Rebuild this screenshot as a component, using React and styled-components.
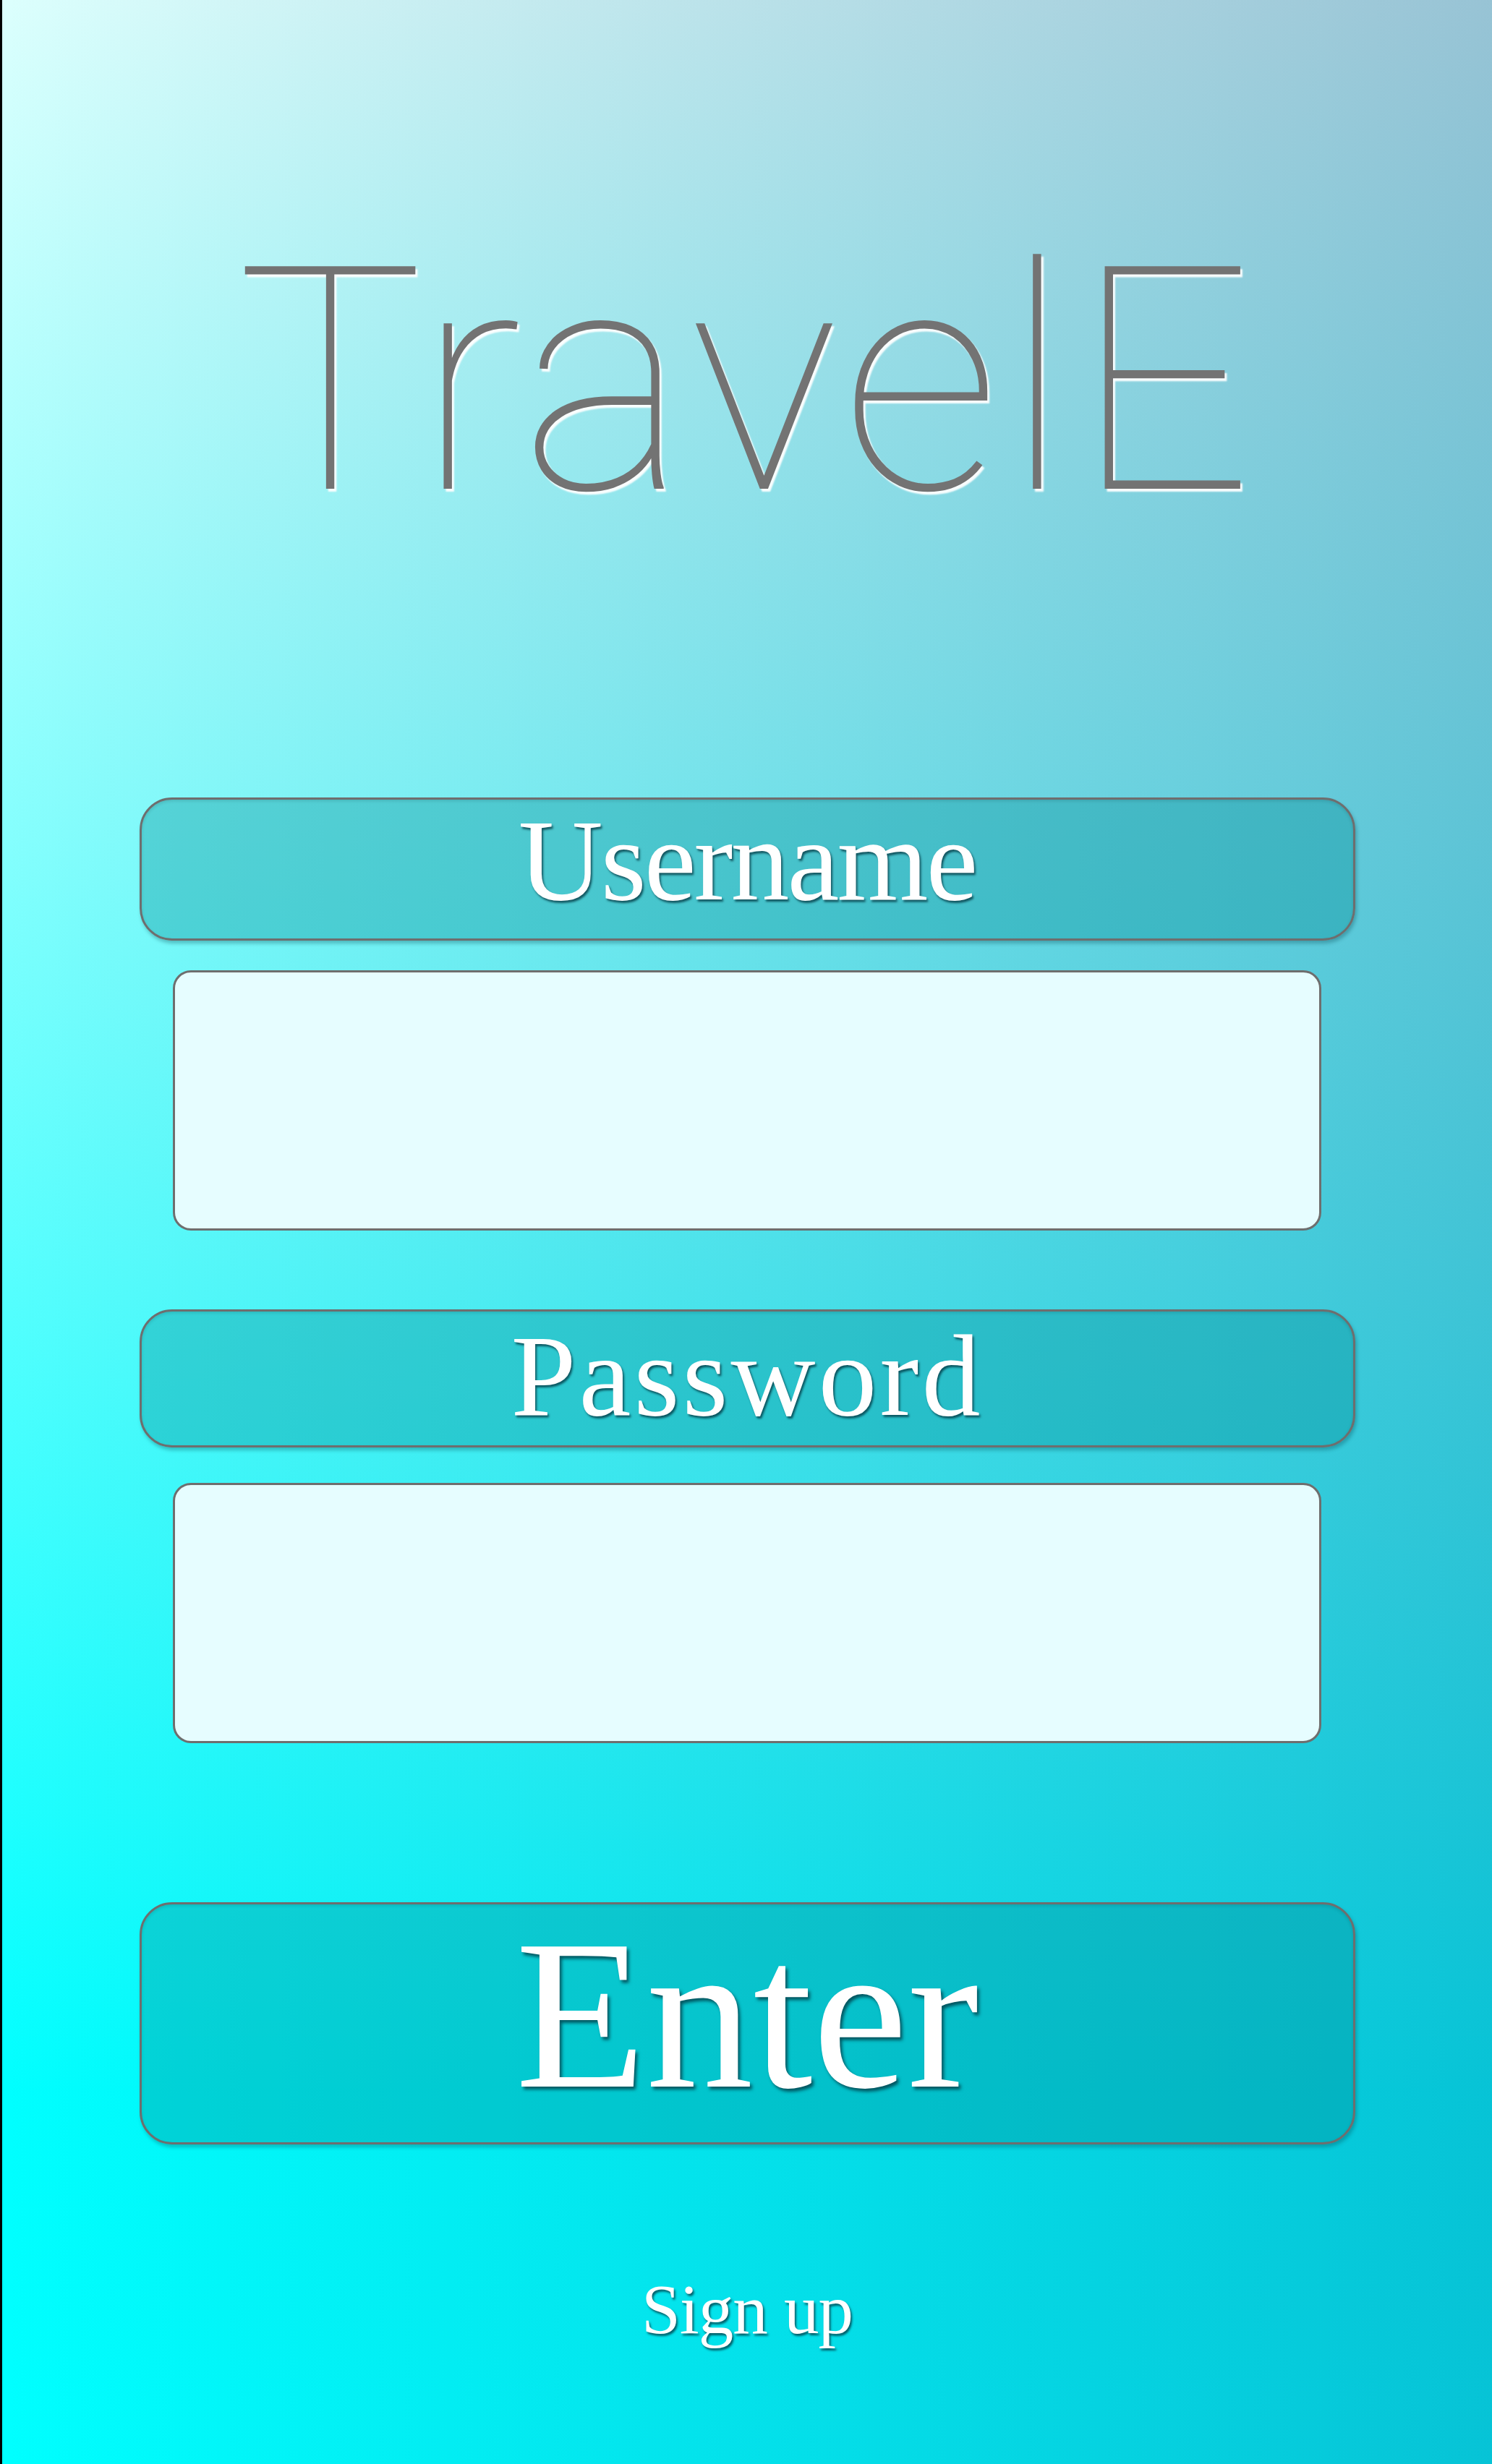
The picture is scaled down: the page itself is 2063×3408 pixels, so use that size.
import React from "react";
import styled, { createGlobalStyle } from "styled-components";

const GlobalStyle = createGlobalStyle`
  html, body {
    margin: 0;
    padding: 0;
  }
  * {
    box-sizing: border-box;
  }
`;

const Page = styled.div`
  min-height: 100vh;
  display: flex;
  flex-direction: column;
  align-items: center;
  padding-top: 312px;
  border-left: 3px solid #000;
  background:
    linear-gradient(to right, rgba(20, 80, 135, 0) 0%, rgba(20, 80, 135, 0.34) 100%),
    linear-gradient(to bottom, #dcfffd 0%, #00ffff 85%);
`;

const Title = styled.h1`
  margin: 0;
  font-family: Roboto, Lato, sans-serif;
  font-weight: 100;
  font-size: 433px;
  line-height: 433px;
  letter-spacing: 7px;
  color: #737373;
  text-shadow: 3px 4px 2px rgba(255, 255, 255, 0.95);
`;

const Form = styled.form`
  width: 1681px;
  margin-top: 358px;
  display: flex;
  flex-direction: column;
  align-items: center;
`;

const LabelBar = styled.div`
  width: 100%;
  height: ${(p) => p.$height}px;
  padding-top: ${(p) => p.$pad}px;
  border: 3px solid #6e6e6e;
  border-radius: 45px;
  background: rgba(0, 140, 150, 0.35);
  box-shadow: 2px 4px 5px rgba(0, 60, 70, 0.3), inset 0 2px 4px rgba(0, 0, 0, 0.12);
  text-align: center;
  font-family: "Liberation Serif", "Times New Roman", serif;
  font-size: 162px;
  line-height: 162px;
  letter-spacing: ${(p) => p.$spacing}px;
  color: #fff;
  text-shadow: 2px 3px 3px rgba(0, 50, 60, 0.75);
`;

const TextBox = styled.input`
  display: block;
  width: 1588px;
  height: 360px;
  margin-top: ${(p) => p.$top}px;
  border: 3px solid #6e6e6e;
  border-radius: 25px;
  background: #e6fdff;
  outline: none;
  padding: 0 40px;
  font-family: "Liberation Serif", serif;
  font-size: 120px;
  color: #444;
`;

const Gap = styled.div`
  height: ${(p) => p.$size}px;
`;

const EnterButton = styled.button`
  display: block;
  width: 100%;
  height: 335px;
  padding: 4px 0 29px;
  border: 3px solid #6e6e6e;
  border-radius: 45px;
  background: rgba(0, 140, 150, 0.35);
  box-shadow: 2px 4px 5px rgba(0, 60, 70, 0.3), inset 0 2px 4px rgba(0, 0, 0, 0.12);
  font-family: "Liberation Serif", "Times New Roman", serif;
  font-size: 296px;
  line-height: 296px;
  color: #fff;
  text-shadow: 3px 4px 4px rgba(0, 50, 60, 0.75);
  text-align: center;
  cursor: pointer;
`;

const SignUp = styled.a`
  display: block;
  margin-top: 180px;
  font-family: "Liberation Serif", "Times New Roman", serif;
  font-size: 97px;
  line-height: 97px;
  letter-spacing: -1px;
  color: #fff;
  text-decoration: none;
  text-shadow: 2px 3px 3px rgba(0, 50, 60, 0.75);
  cursor: pointer;
`;

export default function App() {
  return (
    <>
      <GlobalStyle />
      <Page>
        <Title>TravelE</Title>
        <Form onSubmit={(e) => e.preventDefault()}>
          <LabelBar $height={198} $pad={3} $spacing={-3}>Username</LabelBar>
          <TextBox type="text" $top={41} aria-label="Username" />
          <Gap $size={109} />
          <LabelBar $height={191} $pad={8} $spacing={4}>Password</LabelBar>
          <TextBox type="password" $top={49} aria-label="Password" />
          <Gap $size={220} />
          <EnterButton type="submit">Enter</EnterButton>
        </Form>
        <SignUp>Sign up</SignUp>
      </Page>
    </>
  );
}
